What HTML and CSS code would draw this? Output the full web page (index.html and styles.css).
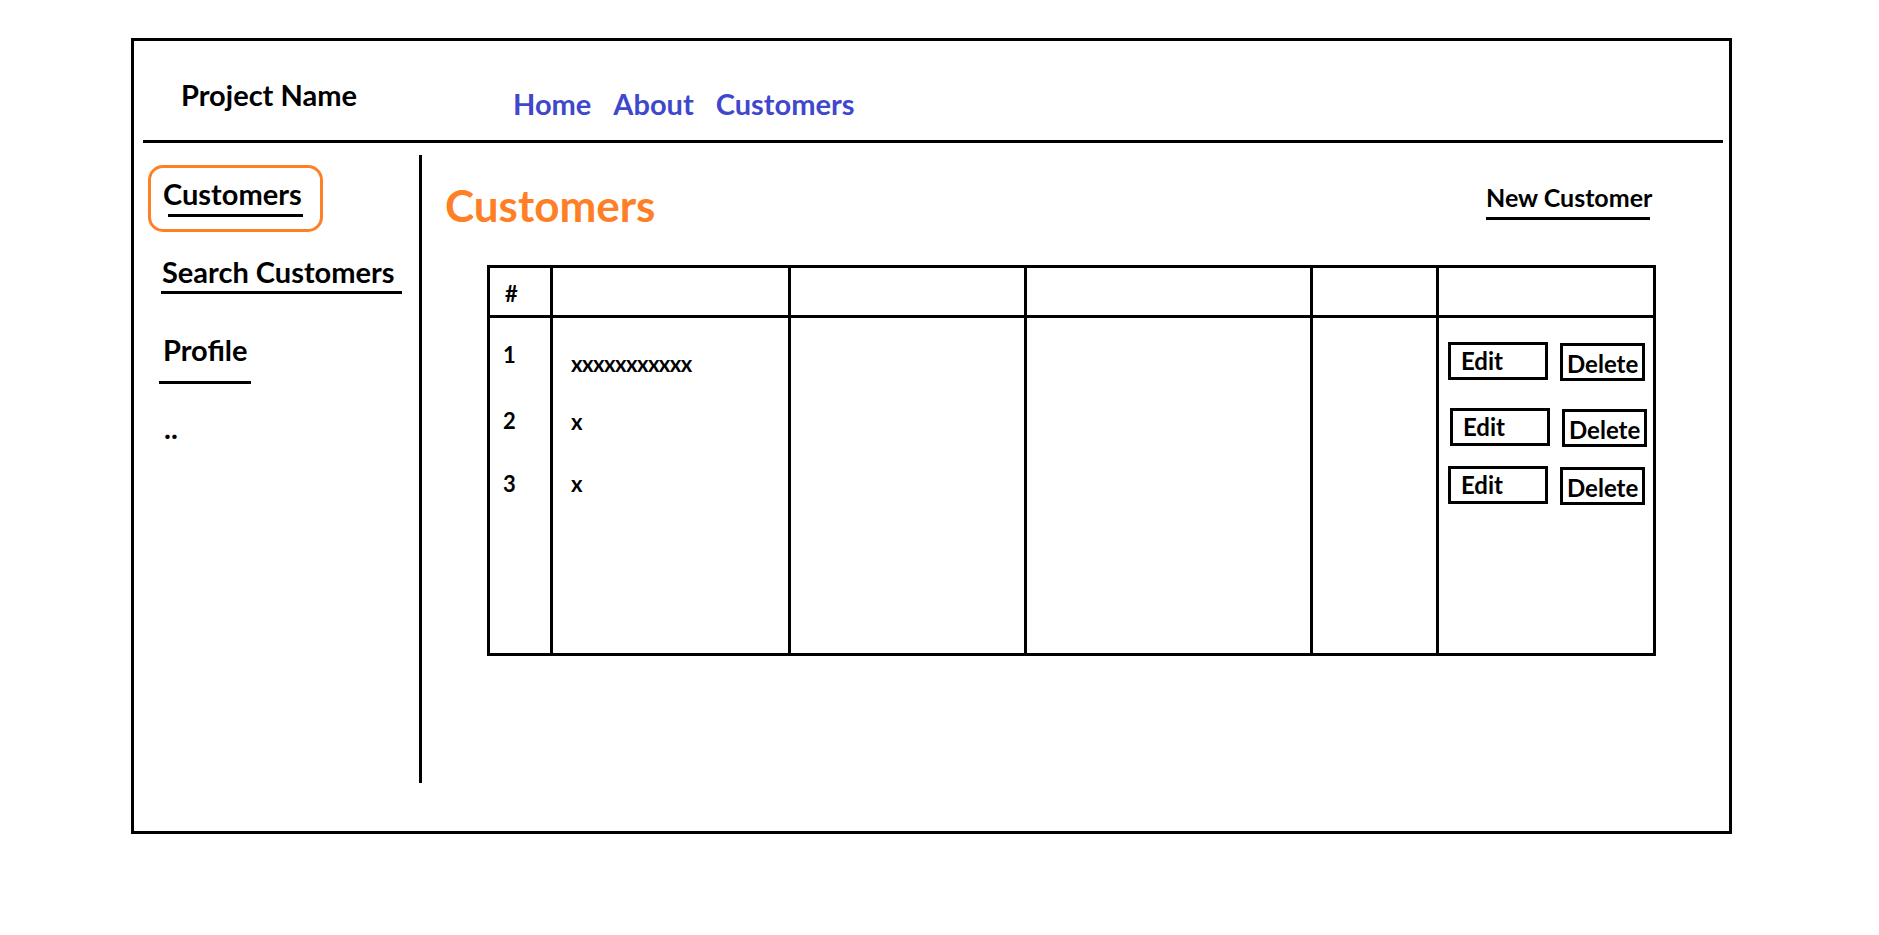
FILE: index.html
```html
<!DOCTYPE html>
<html lang="en">
<head>
<meta charset="utf-8">
<title>Customers</title>
<link rel="stylesheet" href="styles.css">
</head>
<body>
<div class="frame">
  <header class="topbar">
    <div class="brand">Project Name</div>
    <nav class="nav">
      <a class="nav-link">Home</a>
      <a class="nav-link">About</a>
      <a class="nav-link">Customers</a>
    </nav>
  </header>
  <div class="rule-h"></div>
  <div class="body">
    <aside class="sidebar">
      <div class="side-active">
        <span class="side-text">Customers</span>
        <i class="uline u-cust"></i>
      </div>
      <div class="side-item side-search">
        <span class="side-text">Search Customers</span>
        <i class="uline u-search"></i>
      </div>
      <div class="side-item side-profile">
        <span class="side-text">Profile</span>
        <i class="uline u-profile"></i>
      </div>
      <div class="side-item side-more">
        <span class="side-text">..</span>
      </div>
    </aside>
    <div class="divider"></div>
    <main class="main">
      <div class="main-head">
        <h1 class="title">Customers</h1>
        <div class="new">
          <span class="new-text">New Customer</span>
          <i class="uline u-new"></i>
        </div>
      </div>
      <div class="tbl">
        <div class="c1 th"><span class="th-hash">#</span></div>
        <div class="th"></div>
        <div class="th"></div>
        <div class="th"></div>
        <div class="th"></div>
        <div class="th"></div>

        <div class="c1 td td-num">
          <span class="v v1">1</span>
          <span class="v n2">2</span>
          <span class="v n3">3</span>
        </div>
        <div class="td td-name">
          <span class="v v1 xs">xxxxxxxxxxx</span>
          <span class="v x2">x</span>
          <span class="v x3">x</span>
        </div>
        <div class="td"></div>
        <div class="td"></div>
        <div class="td"></div>
        <div class="td td-act">
          <div class="btnrow">
            <span class="btn btn-edit">Edit</span>
            <span class="btn btn-del">Delete</span>
          </div>
          <div class="btnrow r2">
            <span class="btn btn-edit">Edit</span>
            <span class="btn btn-del">Delete</span>
          </div>
          <div class="btnrow r3">
            <span class="btn btn-edit">Edit</span>
            <span class="btn btn-del">Delete</span>
          </div>
        </div>
      </div>
    </main>
  </div>
</div>
</body>
</html>
```

FILE: styles.css
```css
html, body {
  margin: 0;
  background: #ffffff;
}

body {
  font-family: Lato, "Open Sans", sans-serif;
  font-weight: 700;
  color: #000000;
}

.frame {
  margin: 38px 0 0 131px;
  width: 1601px;
  height: 796px;
  border: 3px solid #000;
  box-sizing: border-box;
  display: flex;
  flex-direction: column;
}

/* ---------- top bar ---------- */
.topbar {
  height: 99px;
  display: flex;
  align-items: flex-start;
  padding-left: 47px;
  box-sizing: border-box;
  flex: none;
}

.brand {
  width: 332px;
  font-size: 29px;
  line-height: 1;
  margin-top: 39px;
  white-space: nowrap;
}

.nav {
  display: flex;
  gap: 22px;
  margin-top: 48px;
  font-size: 29px;
  line-height: 1;
}

.nav-link {
  color: #3f48cc;
  text-decoration: none;
}

.rule-h {
  height: 3px;
  background: #000;
  margin: 0 6px 0 9px;
  flex: none;
}

/* ---------- body ---------- */
.body {
  display: flex;
  flex: 1;
}

.sidebar {
  width: 285px;
  flex: none;
  display: flex;
  flex-direction: column;
  align-items: flex-start;
  font-size: 29px;
  line-height: 1;
}

.side-text {
  display: block;
  white-space: nowrap;
}

.uline {
  display: block;
  height: 3px;
  background: #000;
}

.side-active {
  margin: 22px 0 0 14px;
  width: 175px;
  height: 67px;
  box-sizing: border-box;
  border: 3px solid #ff7f27;
  border-radius: 15px;
  padding: 11px 0 0 12px;
}

.u-cust {
  margin: 6px 0 0 5px;
  width: 135px;
}

.side-search {
  margin: 25px 0 0 28px;
}

.u-search {
  margin: 5px 0 0 -1px;
  width: 241px;
}

.side-profile {
  margin: 41px 0 0 29px;
}

.u-profile {
  margin: 17px 0 0 -4px;
  width: 92px;
}

.side-more {
  margin: 29px 0 0 30px;
}

.divider {
  width: 3px;
  height: 628px;
  margin-top: 12px;
  background: #000;
  flex: none;
}

/* ---------- main ---------- */
.main {
  flex: 1;
  padding: 40px 0 0 23px;
}

.main-head {
  display: flex;
  justify-content: space-between;
  align-items: flex-start;
  height: 44px;
}

.title {
  margin: 0;
  font-size: 44px;
  line-height: 1;
  font-weight: 700;
  color: #ff7f27;
}

.new {
  width: 164px;
  margin: 2px 79px 0 0;
  font-size: 25px;
  line-height: 1;
}

.new-text {
  display: block;
  white-space: nowrap;
}

.u-new {
  margin-top: 7px;
  width: 164px;
}

/* ---------- table ---------- */
.tbl {
  margin: 38px 0 0 42px;
  width: 1169px;
  height: 391px;
  border: 3px solid #000;
  box-sizing: border-box;
  display: grid;
  grid-template-columns: 60px 238px 236px 286px 126px 217px;
  grid-template-rows: 50px 335px;
  font-size: 22px;
  line-height: 1;
}

.tbl > div {
  box-sizing: border-box;
}

.tbl > div:not(.c1) {
  border-left: 3px solid #000;
}

.th {
  border-bottom: 3px solid #000;
}

.th-hash {
  display: block;
  padding: 15px 0 0 15px;
}

.td {
  display: flex;
  flex-direction: column;
  align-items: flex-start;
}

.v {
  display: block;
  white-space: nowrap;
}

.xs {
  letter-spacing: -0.5px;
}

.td-num {
  padding: 26px 0 0 13px;
}

.n2 { margin-top: 44px; }
.n3 { margin-top: 41px; }

.td-name {
  padding: 35px 0 0 18px;
}

.x2 { margin-top: 36px; }
.x3 { margin-top: 40px; }

.td-act {
  padding: 24px 0 0 9px;
}

.btnrow {
  display: flex;
  gap: 12px;
  align-items: flex-start;
}

.r2 { margin: 27px 0 0 2px; }
.r3 { margin-top: 19px; }

.btn {
  display: block;
  box-sizing: border-box;
  border: 3px solid #000;
  height: 38px;
  font-size: 24px;
  line-height: 1;
  white-space: nowrap;
}

.btn-edit {
  width: 100px;
  padding: 4px 0 0 10px;
}

.btn-del {
  width: 85px;
  margin-top: 1px;
  padding: 6px 0 0 4px;
}
```
